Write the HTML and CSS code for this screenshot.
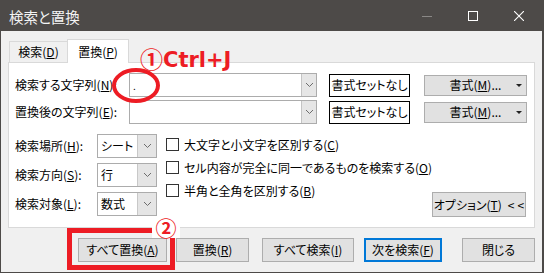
FILE: index.html
```html
<!DOCTYPE html>
<html lang="ja">
<head>
<meta charset="utf-8">
<title>検索と置換</title>
<link rel="stylesheet" href="styles.css">
</head>
<body>
<div class="window">
  <div class="titlebar">
    <span class="title">検索と置換</span>
    <div class="ctls">
      <div class="ctl"><svg width="10" height="10" viewBox="0 0 10 10"><line x1="0" y1="5.5" x2="10" y2="5.5" stroke="#8a8886" stroke-width="1"/></svg></div>
      <div class="ctl"><svg width="10" height="10" viewBox="0 0 10 10"><rect x="0.5" y="0.5" width="9" height="9" fill="none" stroke="#fff" stroke-width="1"/></svg></div>
      <div class="ctl"><svg width="10" height="10" viewBox="0 0 10 10"><path d="M0 0L10 10M10 0L0 10" stroke="#fff" stroke-width="1.1"/></svg></div>
    </div>
  </div>
  <div class="content">
    <div class="tabs">
      <div class="tab">検索(<u>D</u>)</div>
      <div class="tab active">置換(<u>P</u>)</div>
    </div>
    <div class="panel">
      <div class="row">
        <div class="lbl1">検索する文字列(<u>N</u>):</div>
        <div class="combo"><div class="val dot">.</div><div class="drop"><svg width="7" height="4" viewBox="0 0 7 4"><polyline points="0,0 3.5,3.5 7,0" fill="none" stroke="#6d6d6d" stroke-width="1"/></svg></div></div>
        <div class="fmtbox">書式セットなし</div>
        <div class="btn split"><span class="sl">書式(<u>M</u>)...</span><span class="arr"></span></div>
      </div>
      <div class="row">
        <div class="lbl1">置換後の文字列(<u>E</u>):</div>
        <div class="combo"><div class="val"></div><div class="drop"><svg width="7" height="4" viewBox="0 0 7 4"><polyline points="0,0 3.5,3.5 7,0" fill="none" stroke="#6d6d6d" stroke-width="1"/></svg></div></div>
        <div class="fmtbox">書式セットなし</div>
        <div class="btn split"><span class="sl">書式(<u>M</u>)...</span><span class="arr"></span></div>
      </div>
      <div class="lower">
        <div class="selects">
          <div class="srow"><div class="lbl2">検索場所(<u>H</u>):</div><div class="sel"><div class="val">シート</div><div class="drop"><svg width="7" height="4" viewBox="0 0 7 4"><polyline points="0,0 3.5,3.5 7,0" fill="none" stroke="#6d6d6d" stroke-width="1"/></svg></div></div></div>
          <div class="srow"><div class="lbl2">検索方向(<u>S</u>):</div><div class="sel"><div class="val">行</div><div class="drop"><svg width="7" height="4" viewBox="0 0 7 4"><polyline points="0,0 3.5,3.5 7,0" fill="none" stroke="#6d6d6d" stroke-width="1"/></svg></div></div></div>
          <div class="srow"><div class="lbl2">検索対象(<u>L</u>):</div><div class="sel"><div class="val">数式</div><div class="drop"><svg width="7" height="4" viewBox="0 0 7 4"><polyline points="0,0 3.5,3.5 7,0" fill="none" stroke="#6d6d6d" stroke-width="1"/></svg></div></div></div>
        </div>
        <div class="checks">
          <div class="crow"><span class="cb"></span><span>大文字と小文字を区別する(<u>C</u>)</span></div>
          <div class="crow"><span class="cb"></span><span>セル内容が完全に同一であるものを検索する(<u>O</u>)</span></div>
          <div class="crow"><span class="cb"></span><span>半角と全角を区別する(<u>B</u>)</span></div>
        </div>
        <div class="btn opt">オプション(<u>T</u>)<span class="lt">&lt;&lt;</span></div>
      </div>
    </div>
    <div class="btns">
      <div class="btn b1">すべて置換(<u>A</u>)</div>
      <div class="btn b2">置換(<u>R</u>)</div>
      <div class="btn b3">すべて検索(<u>I</u>)</div>
      <div class="btn b4 default">次を検索(<u>F</u>)</div>
      <div class="btn b5">閉じる</div>
    </div>
  </div>
</div>
<div class="anno-ctrl"><span class="circ">①</span><span class="ctrl">Ctrl+J</span></div>
<div class="anno-ellipse"></div>
<div class="anno-rect"></div>
<div class="anno-num">②</div>
</body>
</html>
```
FILE: styles.css
```css
html, body {
  margin: 0;
  padding: 0;
}
body {
  position: relative;
  width: 544px;
  height: 273px;
  overflow: hidden;
  background: #f0f0f0;
  font-family: "Noto Sans CJK JP", "Noto Sans", sans-serif;
  font-size: 12px;
  line-height: 16px;
  font-feature-settings: "palt";
  color: #000;
}
u {
  text-decoration: underline;
  text-underline-offset: 1px;
  text-decoration-thickness: 1px;
}
.window {
  width: 544px;
  height: 273px;
  box-sizing: border-box;
  border-left: 1px solid #4d4a48;
  border-right: 2px solid #4d4a48;
  border-bottom: 1px solid #4d4a48;
  background: #f0f0f0;
}
.titlebar {
  height: 31px;
  background: #4d4a48;
  display: flex;
  align-items: center;
  color: #f4f4f4;
}
.title {
  padding-left: 8px;
  font-size: 14.5px;
  line-height: 20px;
  padding-top: 2px;
}
.ctls {
  margin-left: auto;
  display: flex;
}
.ctl {
  width: 46px;
  height: 31px;
  display: flex;
  align-items: center;
  justify-content: center;
}
.ctl svg {
  display: block;
}
.content {
  padding: 8px 0 0 7px;
}
.tabs {
  display: flex;
  align-items: flex-end;
  height: 23px;
  padding-left: 1px;
}
.tab {
  height: 21px;
  width: 58px;
  box-sizing: border-box;
  border: 1px solid #d9d9d9;
  border-bottom: none;
  border-right: none;
  background: #f0f0f0;
  display: flex;
  align-items: center;
  justify-content: center;
}
.tab.active {
  position: relative;
  width: 62px;
  height: 24px;
  margin-bottom: -1px;
  background: #fff;
  border-right: 1px solid #d9d9d9;
}
.panel {
  width: 527px;
  height: 166px;
  box-sizing: border-box;
  border: 1px solid #d9d9d9;
  background: #fff;
  padding: 10px 7px 0 6px;
}
.row {
  display: flex;
  align-items: center;
  height: 24px;
}
.row + .row {
  margin-top: 3px;
}
.lbl1 {
  width: 114px;
  white-space: nowrap;
}
.combo {
  width: 188px;
  height: 24px;
  box-sizing: border-box;
  border: 1px solid #acacac;
  display: flex;
  background: #fff;
}
.val {
  flex: 1;
  padding-left: 3px;
  display: flex;
  align-items: center;
  white-space: nowrap;
}
.dot {
  font-size: 10px;
  align-items: flex-end;
  padding-bottom: 2px;
}
.drop {
  width: 14px;
  background: #e6e6e6;
  border-left: 1px solid #c4c4c4;
  display: flex;
  align-items: center;
  justify-content: center;
}
.fmtbox {
  margin-left: 12px;
  width: 81px;
  height: 23px;
  box-sizing: border-box;
  border: 1px solid #000;
  display: flex;
  align-items: center;
  justify-content: center;
  white-space: nowrap;
}
.btn {
  box-sizing: border-box;
  background: #e1e1e1;
  border: 1px solid #adadad;
  display: flex;
  align-items: center;
  justify-content: center;
  white-space: nowrap;
}
.split {
  margin-left: 14px;
  width: 103px;
  height: 21px;
  padding-left: 14px;
}
.sl {
  flex: 1;
  text-align: center;
}
.arr {
  width: 14px;
  height: 21px;
  display: flex;
  align-items: center;
  justify-content: center;
}
.arr::before {
  content: "";
  border-left: 3px solid transparent;
  border-right: 3px solid transparent;
  border-top: 3px solid #222;
}
.lower {
  display: flex;
  margin-top: 10px;
  height: 83px;
}
.selects {
  display: flex;
  flex-direction: column;
  gap: 5px;
}
.srow {
  display: flex;
  align-items: center;
  height: 24px;
}
.lbl2 {
  width: 82px;
  white-space: nowrap;
}
.sel {
  width: 60px;
  height: 24px;
  box-sizing: border-box;
  border: 1px solid #acacac;
  display: flex;
  background: #fff;
}
.sel .drop {
  width: 18px;
  border-left: 1px solid #c8c8c8;
  background: #e5e5e5;
}
.checks {
  margin-left: 9px;
  margin-top: -1px;
  display: flex;
  flex-direction: column;
}
.crow {
  height: 23px;
  display: flex;
  align-items: center;
  gap: 5px;
  white-space: nowrap;
}
.cb {
  width: 13px;
  height: 13px;
  box-sizing: border-box;
  border: 1px solid #333;
  background: #fff;
}
.opt {
  margin-left: auto;
  align-self: flex-end;
  width: 101px;
  height: 25px;
  margin-right: 1px;
}
.lt {
  margin-left: 6px;
  letter-spacing: 3px;
  margin-right: -3px;
}
.btns {
  display: flex;
  margin-top: 10px;
  height: 24px;
}
.btns .btn {
  height: 24px;
}
.b1 { margin-left: 70px; width: 89px; }
.b2 { margin-left: 9px; width: 73px; }
.b3 { margin-left: 13px; width: 92px; }
.b4 { margin-left: 10px; width: 78px; }
.b5 { margin-left: 20px; width: 73px; }
.default {
  border: 2px solid #0078d7;
}
.anno-ctrl {
  position: absolute;
  left: 140px;
  top: 45px;
  display: flex;
  align-items: baseline;
  color: #ed1c24;
  line-height: 24px;
}
.circ {
  font-family: "Noto Sans CJK JP", sans-serif;
  font-size: 23px;
  font-weight: bold;
  font-feature-settings: normal;
  margin-right: 0;
  position: relative;
  top: 1px;
}
.ctrl {
  font-family: "DejaVu Sans", sans-serif;
  font-size: 21px;
  font-weight: bold;
}
.anno-ellipse {
  position: absolute;
  left: 112px;
  top: 68px;
  width: 48px;
  height: 35px;
  box-sizing: border-box;
  border: 4px solid #ed1c24;
  border-radius: 50%;
}
.anno-rect {
  position: absolute;
  left: 67px;
  top: 228px;
  width: 108px;
  height: 42px;
  box-sizing: border-box;
  border: 5px solid #ed1c24;
}
.anno-num {
  position: absolute;
  left: 152px;
  top: 218px;
  width: 28px;
  height: 20px;
  background: #fff;
  color: #ed1c24;
  font-size: 21px;
  line-height: 18px;
  font-weight: bold;
  text-align: center;
  font-feature-settings: normal;
}
```
